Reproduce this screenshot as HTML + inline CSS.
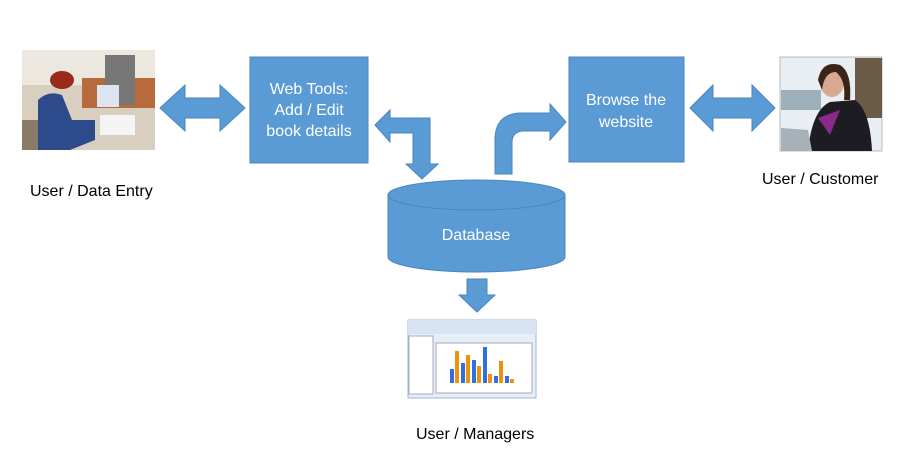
<!DOCTYPE html>
<html><head><meta charset="utf-8"><style>
html,body{margin:0;padding:0;background:#fff;width:920px;height:458px;overflow:hidden}
svg{display:block}
text{font-family:"Liberation Sans",sans-serif}
</style></head><body>
<svg width="920" height="458" viewBox="0 0 920 458">
<g fill="#5b9bd5" stroke="#4a86c0" stroke-width="1">
<polygon points="160,108 185,85 185,98 220,98 220,85 245,108 220,131 220,118 185,118 185,131"/>
<rect x="250" y="57" width="118" height="106"/>
<polygon points="375,125 390,110 390,118 430,118 430,164 438,164 422,179 406,164 413,164 413,133 390,133 390,142"/>
<path d="M495,174 L495,140 Q495,113 522,113 L550,113 L550,104 L566,122 L550,140 L550,131 L524,131 Q512,131 512,143 L512,174 Z"/>
<rect x="569" y="57" width="115" height="105"/>
<polygon points="690,108 713,85 713,98 752,98 752,85 775,108 752,131 752,118 713,118 713,131"/>
<path d="M388,195 L388,257 A88.5,15 0 0 0 565,257 L565,195 Z"/>
<ellipse cx="476.5" cy="195" rx="88.5" ry="15"/>
<polygon points="467,279 487,279 487,295 495,295 477,312 459,295 467,295"/>
</g>
<g fill="#fff" font-size="16" text-anchor="middle">
<text x="309" y="94">Web Tools:</text>
<text x="309" y="115">Add / Edit</text>
<text x="309" y="136">book details</text>
<text x="626" y="105">Browse the</text>
<text x="626" y="127">website</text>
<text x="476" y="240">Database</text>
</g>
<g fill="#000" font-size="16">
<text x="30" y="196">User / Data Entry</text>
<text x="762" y="184">User / Customer</text>
<text x="416" y="439">User / Managers</text>
</g>
<rect x="22" y="50" width="133" height="100" fill="#d8cfc0"/>
<rect x="22" y="50" width="133" height="35" fill="#ece8e0"/>
<rect x="82" y="78" width="73" height="30" fill="#b86a3c"/>
<rect x="105" y="55" width="30" height="50" fill="#777"/>
<rect x="97" y="85" width="22" height="22" fill="#dde6f0"/>
<rect x="100" y="115" width="35" height="20" fill="#f4f4f4"/>
<path d="M38,150 L38,100 Q48,90 62,95 L72,120 L95,120 L95,140 L70,150 Z" fill="#2d4a8a"/>
<ellipse cx="62" cy="80" rx="12" ry="9" fill="#9a2a1a"/>
<rect x="22" y="120" width="16" height="30" fill="#8a7a68"/>
<rect x="780" y="57" width="102" height="94" fill="#e8eef2" stroke="#bbb"/>
<rect x="781" y="90" width="40" height="20" fill="#9eb0bb"/>
<rect x="855" y="58" width="27" height="60" fill="#6b5a45"/>
<path d="M808,151 Q812,110 830,102 L855,100 Q870,110 872,151 Z" fill="#1c1c22"/>
<path d="M818,118 L840,110 L830,135 Z" fill="#8a2a8a"/>
<ellipse cx="832" cy="82" rx="12" ry="15" fill="#d8a890"/>
<path d="M818,80 Q822,60 840,65 Q852,72 850,100 L844,100 Q846,80 836,72 Q824,72 822,90 Z" fill="#3a2418"/>
<polygon points="781,128 808,130 812,151 781,151" fill="#a8b0b8"/>
<rect x="408" y="320" width="128" height="78" fill="#e6eef8" stroke="#9fb6d6"/>
<rect x="408" y="320" width="128" height="14" fill="#d9e4f2"/>
<rect x="409" y="336" width="24" height="58" fill="#fff" stroke="#aab"/>
<rect x="436" y="343" width="96" height="50" fill="#fff" stroke="#aab"/>
<g>
<rect x="450" y="369" width="4" height="14" fill="#2f6fe0"/><rect x="455" y="351" width="4" height="32" fill="#f0900c"/>
<rect x="461" y="363" width="4" height="20" fill="#2f6fe0"/><rect x="466" y="355" width="4" height="28" fill="#f0900c"/>
<rect x="472" y="360" width="4" height="23" fill="#2f6fe0"/><rect x="477" y="366" width="4" height="17" fill="#f0900c"/>
<rect x="483" y="347" width="4" height="36" fill="#2f6fe0"/><rect x="488" y="374" width="4" height="9" fill="#f0900c"/>
<rect x="494" y="376" width="4" height="7" fill="#2f6fe0"/><rect x="499" y="361" width="4" height="22" fill="#f0900c"/>
<rect x="505" y="376" width="4" height="7" fill="#2f6fe0"/><rect x="510" y="379" width="4" height="4" fill="#f0900c"/>
</g>
</svg>
</body></html>
